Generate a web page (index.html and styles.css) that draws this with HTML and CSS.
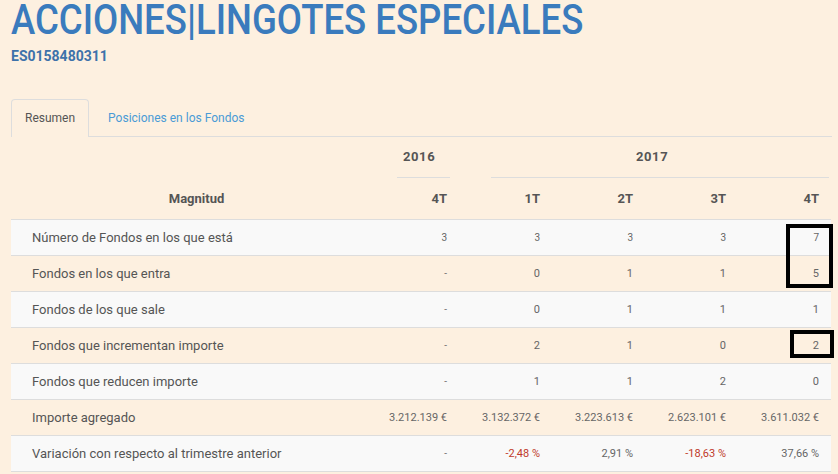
FILE: index.html
```html
<!DOCTYPE html>
<html lang="es">
<head>
<meta charset="utf-8">
<title>Acciones Lingotes Especiales</title>
<link rel="stylesheet" href="styles.css">
</head>
<body>
<div class="page">
  <h1 class="title"><span class="title-in">ACCIONES|LINGOTES ESPECIALES</span></h1>
  <div class="isin">ES0158480311</div>
  <div class="tabs">
    <div class="tab active">Resumen</div>
    <div class="tab link">Posiciones en los Fondos</div>
  </div>
  <div class="table-wrap">
    <table class="data">
      <colgroup>
        <col class="c-label"><col class="c-num"><col class="c-num"><col class="c-num"><col class="c-num"><col class="c-num">
      </colgroup>
      <thead>
        <tr class="years">
          <th></th>
          <th class="year"><div class="year-in y2016">2016</div></th>
          <th class="year" colspan="4"><div class="year-in y2017">2017</div></th>
        </tr>
        <tr class="quarters">
          <th class="mag">Magnitud</th>
          <th>4T</th><th>1T</th><th>2T</th><th>3T</th><th>4T</th>
        </tr>
      </thead>
      <tbody>
        <tr class="odd small">
          <td class="lbl">Número de Fondos en los que está</td>
          <td>3</td><td>3</td><td>3</td><td>3</td><td>7</td>
        </tr>
        <tr>
          <td class="lbl">Fondos en los que entra</td>
          <td class="dash">-</td><td>0</td><td>1</td><td>1</td><td>5</td>
        </tr>
        <tr class="odd">
          <td class="lbl">Fondos de los que sale</td>
          <td class="dash">-</td><td>0</td><td>1</td><td>1</td><td>1</td>
        </tr>
        <tr>
          <td class="lbl">Fondos que incrementan importe</td>
          <td class="dash">-</td><td>2</td><td>1</td><td>0</td><td>2</td>
        </tr>
        <tr class="odd">
          <td class="lbl">Fondos que reducen importe</td>
          <td class="dash">-</td><td>1</td><td>1</td><td>2</td><td>0</td>
        </tr>
        <tr class="money">
          <td class="lbl">Importe agregado</td>
          <td>3.212.139 €</td><td>3.132.372 €</td><td>3.223.613 €</td><td>2.623.101 €</td><td>3.611.032 €</td>
        </tr>
        <tr class="odd pct">
          <td class="lbl">Variación con respecto al trimestre anterior</td>
          <td class="dash">-</td><td class="neg">-2,48 %</td><td>2,91 %</td><td class="neg">-18,63 %</td><td>37,66 %</td>
        </tr>
      </tbody>
    </table>
    <div class="mark mark-a"></div>
    <div class="mark mark-b"></div>
  </div>
</div>
</body>
</html>
```
FILE: styles.css
```css
html, body {
  margin: 0;
  padding: 0;
  background: #fdf0e0;
}
body {
  font-family: Roboto, "Liberation Sans", sans-serif;
  color: #555;
}
.page {
  padding: 0 6px 0 11px;
}
.title {
  margin: -2px 0 0 0;
  font-size: 42px;
  line-height: 44px;
  font-weight: 500;
  color: #3a7bbd;
  white-space: nowrap;
}
.title-in {
  display: inline-block;
  transform: scaleX(0.87);
  transform-origin: left center;
}
.isin {
  margin-top: 4px;
  font-size: 14px;
  line-height: 20px;
  font-weight: 700;
  color: #3d72aa;
}
.tabs {
  margin-top: 33px;
  display: flex;
  border-bottom: 1px solid #ddd;
}
.tab {
  font-size: 12px;
  line-height: 16px;
  padding: 10px 13px;
  border: 1px solid transparent;
  border-bottom: none;
  border-radius: 4px 4px 0 0;
  margin-bottom: -1px;
}
.tab.active {
  border-color: #ddd;
  background: #fdf0e0;
  color: #555;
  padding-bottom: 11px;
}
.tab.link {
  color: #4a9bd6;
  padding-left: 18px;
}
.table-wrap {
  position: relative;
}
.data {
  width: 820px;
  border-collapse: collapse;
  table-layout: fixed;
}
.c-label { width: 355px; }
.c-num { width: 93px; }
.data th {
  font-weight: 700;
  font-size: 13px;
  text-align: right;
  padding: 0 12px 0 0;
  color: #555;
}
.years th {
  height: 41px;
  padding: 0;
  vertical-align: bottom;
}
.year-in {
  border-bottom: 1px solid #ddd;
  text-align: left;
  height: 28px;
  letter-spacing: .6px;
}
.y2016 {
  margin-left: 31px;
  margin-right: 9px;
  padding-left: 6px;
}
.y2017 {
  margin-left: 32px;
  margin-right: 2px;
  padding-left: 145px;
}
.quarters th {
  height: 41px;
  border-bottom: 1px solid #ddd;
  vertical-align: middle;
}
.quarters th.mag {
  text-align: center;
  padding: 0 0 0 16px;
}
.data td {
  height: 35px;
  border-bottom: 1px solid #ddd;
  text-align: right;
  padding: 0 12px 0 0;
  font-size: 11px;
  color: #666;
  white-space: nowrap;
}
.data td.lbl {
  text-align: left;
  padding: 0 0 0 21px;
  font-size: 13px;
  color: #555;
}
.data tr.odd td {
  background: #f9f9f9;
}
.data tr.small td {
  font-size: 10px;
}
.data tr.small td.lbl {
  font-size: 13px;
}
.data td.dash {
  font-size: 10px;
  color: #777;
}
.data td.neg {
  color: #c0392b;
}
.mark {
  position: absolute;
  border: 4px solid #000;
  box-sizing: border-box;
}
.mark-a {
  left: 775px;
  top: 87px;
  width: 47px;
  height: 64px;
}
.mark-b {
  left: 779px;
  top: 193px;
  width: 44px;
  height: 28px;
}
```
